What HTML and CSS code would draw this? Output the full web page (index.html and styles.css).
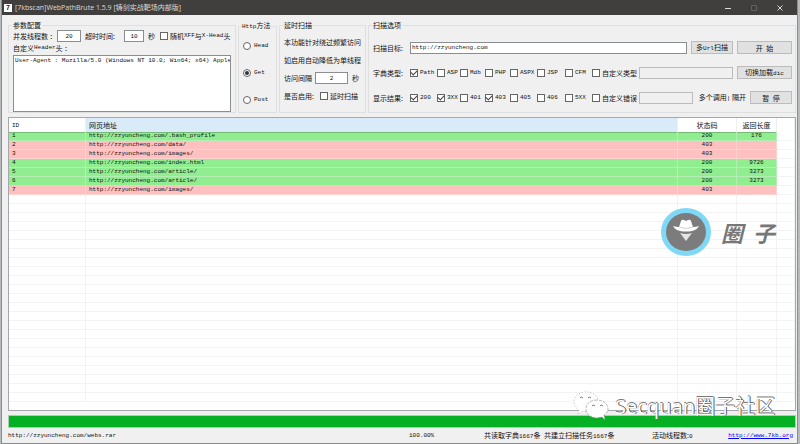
FILE: index.html
```html
<!DOCTYPE html>
<html lang="zh-CN">
<head>
<meta charset="utf-8">
<title>[7kbscan]WebPathBrute 1.5.9</title>
<link rel="stylesheet" href="styles.css">
</head>
<body>
<div class="window">
  <header class="titlebar">
    <span class="app-icon">7</span>
    <h1>[7kbscan]WebPathBrute 1.5.9 [铸剑实战靶场内部版]</h1>
    <button class="win-btn" aria-label="最小化"><svg viewBox="0 0 8 8"><path d="M1 4.5h6"/></svg></button>
    <button class="win-btn dim" aria-label="最大化" disabled><svg viewBox="0 0 8 8"><path d="M1.5 1.5h5v5h-5z"/></svg></button>
    <button class="win-btn" aria-label="关闭"><svg viewBox="0 0 8 8"><path d="M1.5 1.5l5 5M6.5 1.5l-5 5"/></svg></button>
  </header>

  <form class="settings">
    <fieldset class="params">
      <legend>参数配置</legend>
      <div class="line">
        <label class="threads-label" for="threads">并发线程数 ：</label>
        <input class="num" id="threads" type="text" value="20">
        <label class="timeout-label" for="timeout">超时时间:</label>
        <input class="num small" id="timeout" type="text" value="10">
        <span class="unit">秒</span>
        <label class="check"><input type="checkbox">随机<span class="en">XFF</span>与<span class="en">X-Head</span>头</label>
      </div>
      <label class="line" for="header">自定义<span class="en">Header</span>头 ：</label>
      <textarea id="header" wrap="off">User-Agent : Mozilla/5.0 (Windows NT 10.0; Win64; x64) AppleWebKit</textarea>
    </fieldset>

    <fieldset class="method">
      <legend><span class="en">Http</span>方法</legend>
      <label class="check"><input type="radio" name="method"><span class="en">Head</span></label>
      <label class="check"><input type="radio" name="method" checked><span class="en">Get</span></label>
      <label class="check"><input type="radio" name="method"><span class="en">Post</span></label>
    </fieldset>

    <fieldset class="delay">
      <legend>延时扫描</legend>
      <p class="line">本功能针对绕过频繁访问</p>
      <p class="line">如启用自动降低为单线程</p>
      <div class="line">
        <label for="interval">访问间隔</label>
        <input class="num wide" id="interval" type="text" value="2">
        <span>秒</span>
      </div>
      <div class="line">
        <span class="enable">是否启用:</span>
        <label class="check"><input type="checkbox">延时扫描</label>
      </div>
    </fieldset>

    <fieldset class="options">
      <legend>扫描选项</legend>
      <div class="target">
        <label for="target">扫描目标:</label>
        <input id="target" type="text" value="http://zzyuncheng.com">
        <button type="button" class="multi">多<span class="en">Url</span>扫描</button>
        <button type="button" class="main-btn">开&ensp;始</button>
      </div>
      <div class="choices">
        <span>字典类型:</span>
        <label class="check"><input type="checkbox" checked><span class="en">Path</span></label>
        <label class="check"><input type="checkbox"><span class="en">ASP</span></label>
        <label class="check"><input type="checkbox"><span class="en">Mdb</span></label>
        <label class="check"><input type="checkbox"><span class="en">PHP</span></label>
        <label class="check"><input type="checkbox"><span class="en">ASPX</span></label>
        <label class="check"><input type="checkbox"><span class="en">JSP</span></label>
        <label class="check"><input type="checkbox"><span class="en">CFM</span></label>
        <label class="check"><input type="checkbox">自定义类型</label>
        <div class="extra">
          <input type="text" aria-label="自定义类型" disabled>
          <button type="button" class="main-btn">切换加载<span class="en">dic</span></button>
        </div>
      </div>
      <div class="choices">
        <span>显示结果:</span>
        <label class="check"><input type="checkbox" checked><span class="en">200</span></label>
        <label class="check"><input type="checkbox" checked><span class="en">3XX</span></label>
        <label class="check"><input type="checkbox"><span class="en">401</span></label>
        <label class="check"><input type="checkbox" checked><span class="en">403</span></label>
        <label class="check"><input type="checkbox"><span class="en">405</span></label>
        <label class="check"><input type="checkbox"><span class="en">406</span></label>
        <label class="check"><input type="checkbox"><span class="en">5XX</span></label>
        <label class="check"><input type="checkbox">自定义错误</label>
        <div class="extra">
          <input type="text" aria-label="自定义错误" disabled>
          <span class="hint">多个调用<span class="en">|</span> 隔开</span>
          <button type="button" class="pause">暂&ensp;停</button>
        </div>
      </div>
    </fieldset>
  </form>

  <main class="results">
    <table>
      <colgroup><col class="c-id"><col><col class="c-status"><col class="c-size"><col class="c-rest"></colgroup>
      <thead>
        <tr><th><span class="en">ID</span></th><th class="sorted">网页地址</th><th>状态码</th><th>返回长度</th><th></th></tr>
      </thead>
      <tbody>
        <tr class="ok selected"><td>1</td><td>http://zzyuncheng.com/.bash_profile</td><td>200</td><td>176</td><td></td></tr>
        <tr class="denied"><td>2</td><td>http://zzyuncheng.com/data/</td><td>403</td><td></td><td></td></tr>
        <tr class="denied"><td>3</td><td>http://zzyuncheng.com/images/</td><td>403</td><td></td><td></td></tr>
        <tr class="ok"><td>4</td><td>http://zzyuncheng.com/index.html</td><td>200</td><td>9726</td><td></td></tr>
        <tr class="ok"><td>5</td><td>http://zzyuncheng.com/article/</td><td>200</td><td>3273</td><td></td></tr>
        <tr class="ok"><td>6</td><td>http://zzyuncheng.com/article/</td><td>200</td><td>3273</td><td></td></tr>
        <tr class="denied"><td>7</td><td>http://zzyuncheng.com/images/</td><td>403</td><td></td><td></td></tr>
        <tr><td></td><td></td><td></td><td></td><td></td></tr>
        <tr><td></td><td></td><td></td><td></td><td></td></tr>
        <tr><td></td><td></td><td></td><td></td><td></td></tr>
        <tr><td></td><td></td><td></td><td></td><td></td></tr>
        <tr><td></td><td></td><td></td><td></td><td></td></tr>
        <tr><td></td><td></td><td></td><td></td><td></td></tr>
        <tr><td></td><td></td><td></td><td></td><td></td></tr>
        <tr><td></td><td></td><td></td><td></td><td></td></tr>
        <tr><td></td><td></td><td></td><td></td><td></td></tr>
        <tr><td></td><td></td><td></td><td></td><td></td></tr>
        <tr><td></td><td></td><td></td><td></td><td></td></tr>
        <tr><td></td><td></td><td></td><td></td><td></td></tr>
        <tr><td></td><td></td><td></td><td></td><td></td></tr>
        <tr><td></td><td></td><td></td><td></td><td></td></tr>
        <tr><td></td><td></td><td></td><td></td><td></td></tr>
        <tr><td></td><td></td><td></td><td></td><td></td></tr>
        <tr><td></td><td></td><td></td><td></td><td></td></tr>
        <tr><td></td><td></td><td></td><td></td><td></td></tr>
        <tr><td></td><td></td><td></td><td></td><td></td></tr>
        <tr><td></td><td></td><td></td><td></td><td></td></tr>
        <tr><td></td><td></td><td></td><td></td><td></td></tr>
        <tr><td></td><td></td><td></td><td></td><td></td></tr>
        <tr><td></td><td></td><td></td><td></td><td></td></tr>
      </tbody>
    </table>
  </main>

  <div class="progress" role="progressbar" aria-valuenow="100" aria-label="扫描进度"></div>

  <footer class="status">
    <span class="en">http://zzyuncheng.com/webs.rar</span>
    <span class="en">100.00%</span>
    <span>共读取字典<span class="en">1667</span>条</span>
    <span>共建立扫描任务<span class="en">1667</span>条</span>
    <span>活动线程数:<span class="en">0</span></span>
    <a class="en" href="http://www.7kb.org">http://www.7kb.org</a>
  </footer>

  <div class="stamp">
    <svg viewBox="0 0 50 48">
      <ellipse cx="25" cy="24" rx="25" ry="24" fill="#80d8f7"/>
      <ellipse cx="25" cy="24" rx="20" ry="19" fill="#7c7c7c"/>
      <path d="M12 18q3 1 6 1l2-6q1-2 3-1l2 1 2-1q2-1 3 1l2 6q3 0 6-1-2 4-7 5-6 1-12 0-5-1-7-5z" fill="#fff"/>
      <path d="M19 25q6 2 12 0l-6 8z" fill="#e4e4e4"/>
      <path d="M18 19q7 3 14 0" fill="none" stroke="#bbb" stroke-width="0.7"/>
    </svg>
    <span>圈</span><span>子</span>
  </div>

  <div class="watermark">
    <svg viewBox="0 0 36 31">
      <g fill="#fff" stroke="#888" stroke-width="0.6">
        <path d="M13 1C5 1 1 6 1 11c0 4 2 6 5 8l-1 4 5-3c8 2 15-3 15-10 0-5-5-9-12-9z" stroke-dasharray="1 2"/>
        <path d="M24 9c-7 0-11 4-11 9s5 9 11 9l5-1 3 3-1-5c3-2 4-4 4-6 0-5-5-9-11-9z" stroke-dasharray="3 1"/>
      </g>
      <path d="M7 7q1-2 3 0M15 7q1-2 3 0M19 15q1-2 3 0M27 15q1-2 3 0" fill="none" stroke="#777"/>
    </svg>
    <span>Secquan圈子社区</span>
  </div>
</div>
</body>
</html>
```
FILE: styles.css
```css
* { box-sizing: border-box; }

body {
  margin: 0;
  background: #b8bbbd;
  color: #111;
  font: 7px/10px "Noto Sans CJK SC", sans-serif;
}

.window {
  position: relative;
  margin: 0 2px 0 1px;
  background: #f0f0f0;
  border: 1px solid #8c8c8c;
  border-top: 0;
}

input, textarea, button { font: inherit; color: inherit; margin: 0; }
p { margin: 0; }

.en, table td, input, textarea { font: 6px/10px "Liberation Mono", monospace; }

/* title bar */
.titlebar {
  display: flex;
  align-items: center;
  height: 15px;
  padding: 0 4px 0 2px;
  background: #403f3d;
  color: #ddd;
}
.titlebar h1 {
  flex: 1;
  margin: 0 0 0 3px;
  font: 7px/14px "Open Sans", "Noto Sans CJK SC", sans-serif;
}
.app-icon {
  width: 8px;
  background: #fff;
  color: #222;
  font: bold 7px/8px "Liberation Sans", sans-serif;
  text-align: center;
}
.win-btn {
  width: 26px;
  height: 15px;
  padding: 0;
  border: 0;
  background: none;
}
.win-btn svg { display: block; width: 8px; margin: 0 auto; fill: none; stroke: #ddd; }
.win-btn.dim svg { stroke: #62615f; }

/* settings */
.settings {
  display: grid;
  grid-template-columns: 228px 39px 87px 1fr;
  gap: 2px;
  padding: 5px 1px 4px 6px;
}
fieldset {
  min-width: 0;
  height: 93px;
  margin: 0;
  padding: 0 4px;
  border: 1px solid #dfdfdf;
}
legend { padding: 0 1px; margin-left: -1px; line-height: 10px; white-space: nowrap; }
.line { display: flex; align-items: center; height: 12px; white-space: nowrap; }
.check { display: flex; align-items: center; white-space: nowrap; }

input[type="text"], textarea {
  min-width: 0;
  border: 1px solid #8a8d91;
  border-radius: 0;
  background: #fff;
  padding: 0 1px;
}
input[type="text"] { height: 12px; }
input[type="text"]:disabled { background: #f0f0f0; border-color: #bbb; }
input.num { width: 24px; text-align: center; }
input.num.small { width: 20px; }
input.num.wide { width: 33px; margin: 0 4px 0 3px; }

input[type="checkbox"], input[type="radio"] {
  appearance: none;
  flex: none;
  display: grid;
  place-items: center;
  width: 8px;
  height: 8px;
  margin-right: 2px;
  border: 1px solid #666;
  background: #fff;
}
input[type="radio"] { border-radius: 50%; margin-right: 3px; }
input[type="radio"]:checked::after {
  content: "";
  width: 4px;
  height: 4px;
  border-radius: 50%;
  background: #333;
}
input[type="checkbox"]:checked::after {
  content: "";
  width: 5px;
  height: 3px;
  margin-bottom: 1px;
  border: solid #444;
  border-width: 0 0 1px 1px;
  transform: rotate(-45deg);
}

.threads-label { width: 44px; }
.timeout-label { width: 43px; padding-left: 4px; }
.unit { width: 16px; padding-left: 4px; }
textarea {
  display: block;
  width: 100%;
  height: 57px;
  margin-top: 1px;
  resize: none;
  overflow: hidden;
}

.method { padding: 0 2px 0 4px; }
.method legend { padding: 0; }
.method .check { height: 27px; }
.delay { padding-top: 3px; }
.delay .line { height: 18px; }
.enable { width: 36px; }

.options { padding-top: 5px; padding-right: 3px; }
.target { display: flex; align-items: center; height: 25px; }
.target label { width: 37px; }
.target input { flex: 1; }
.choices {
  display: grid;
  grid-template-columns: 37px 27px 23px 25px 25px 27px 28px 27px 47px 1fr;
  align-items: center;
  height: 25px;
  white-space: nowrap;
}
.extra { display: flex; align-items: center; min-width: 0; }
.extra input { flex: 1; }
.hint { margin: 0 4px 0 6px; }

.settings button {
  flex: none;
  height: 13px;
  margin-left: 4px;
  padding: 0;
  border: 1px solid #bcbcbc;
  background: #e1e1e1;
  line-height: 10px;
}
.settings .multi { width: 42px; }
.settings .main-btn { width: 55px; }
.settings .pause { width: 42px; margin-left: 0; }

/* results */
.results {
  margin: 0 1px 0 6px;
  border: 1px solid #a4a8ac;
  background: #fff;
  padding-bottom: 8px;
}
table { width: 100%; border-collapse: separate; border-spacing: 0; table-layout: fixed; }
.c-id { width: 77px; }
.c-status { width: 59px; }
.c-size { width: 40px; }
.c-rest { width: 18px; }
th { height: 14px; padding: 0 3px; font-weight: normal; text-align: left; border-right: 1px solid #eee; white-space: nowrap; }
th.sorted { background: #d9ebf9; }
th:nth-child(n+3), td:nth-child(n+3) { text-align: center; }
table td {
  height: 9px;
  padding: 0 3px;
  line-height: 8px;
  border-right: 1px solid #f3f3f3;
  border-bottom: 1px solid #f3f3f3;
}
.ok td:not(:last-child) { background: #90ee90; border-color: #b4eeb4; }
.denied td:not(:last-child) { background: #ffc0c0; border-color: #ffd2d2; }
.selected td:not(:last-child) { box-shadow: inset 0 1px #75ba75; }

/* progress and status */
.progress { height: 13px; margin: 4px 1px 0 6px; background: #06b025; border: 1px solid #a9cfb0; }
.status {
  display: grid;
  grid-template-columns: 401px 75px 60px 108px 1fr auto;
  align-items: center;
  height: 15px;
  padding: 0 4px 0 6px;
  white-space: nowrap;
}
.status a { color: #00f; }

/* overlays */
.stamp {
  position: absolute;
  right: 22px;
  top: 208px;
  display: flex;
  align-items: center;
  gap: 10px;
  color: #777;
  font: italic bold 22px/48px "Noto Sans CJK SC", sans-serif;
}
.stamp svg { width: 50px; height: 48px; }
.watermark {
  position: absolute;
  right: 22px;
  top: 391px;
  display: flex;
  align-items: center;
  gap: 6px;
  color: #fff;
  font: 20px/31px "Noto Sans", "Noto Sans CJK SC", sans-serif;
  text-shadow: 1px 0 #555, 0 -1px #777;
}
.watermark svg { width: 36px; height: 31px; }
```
